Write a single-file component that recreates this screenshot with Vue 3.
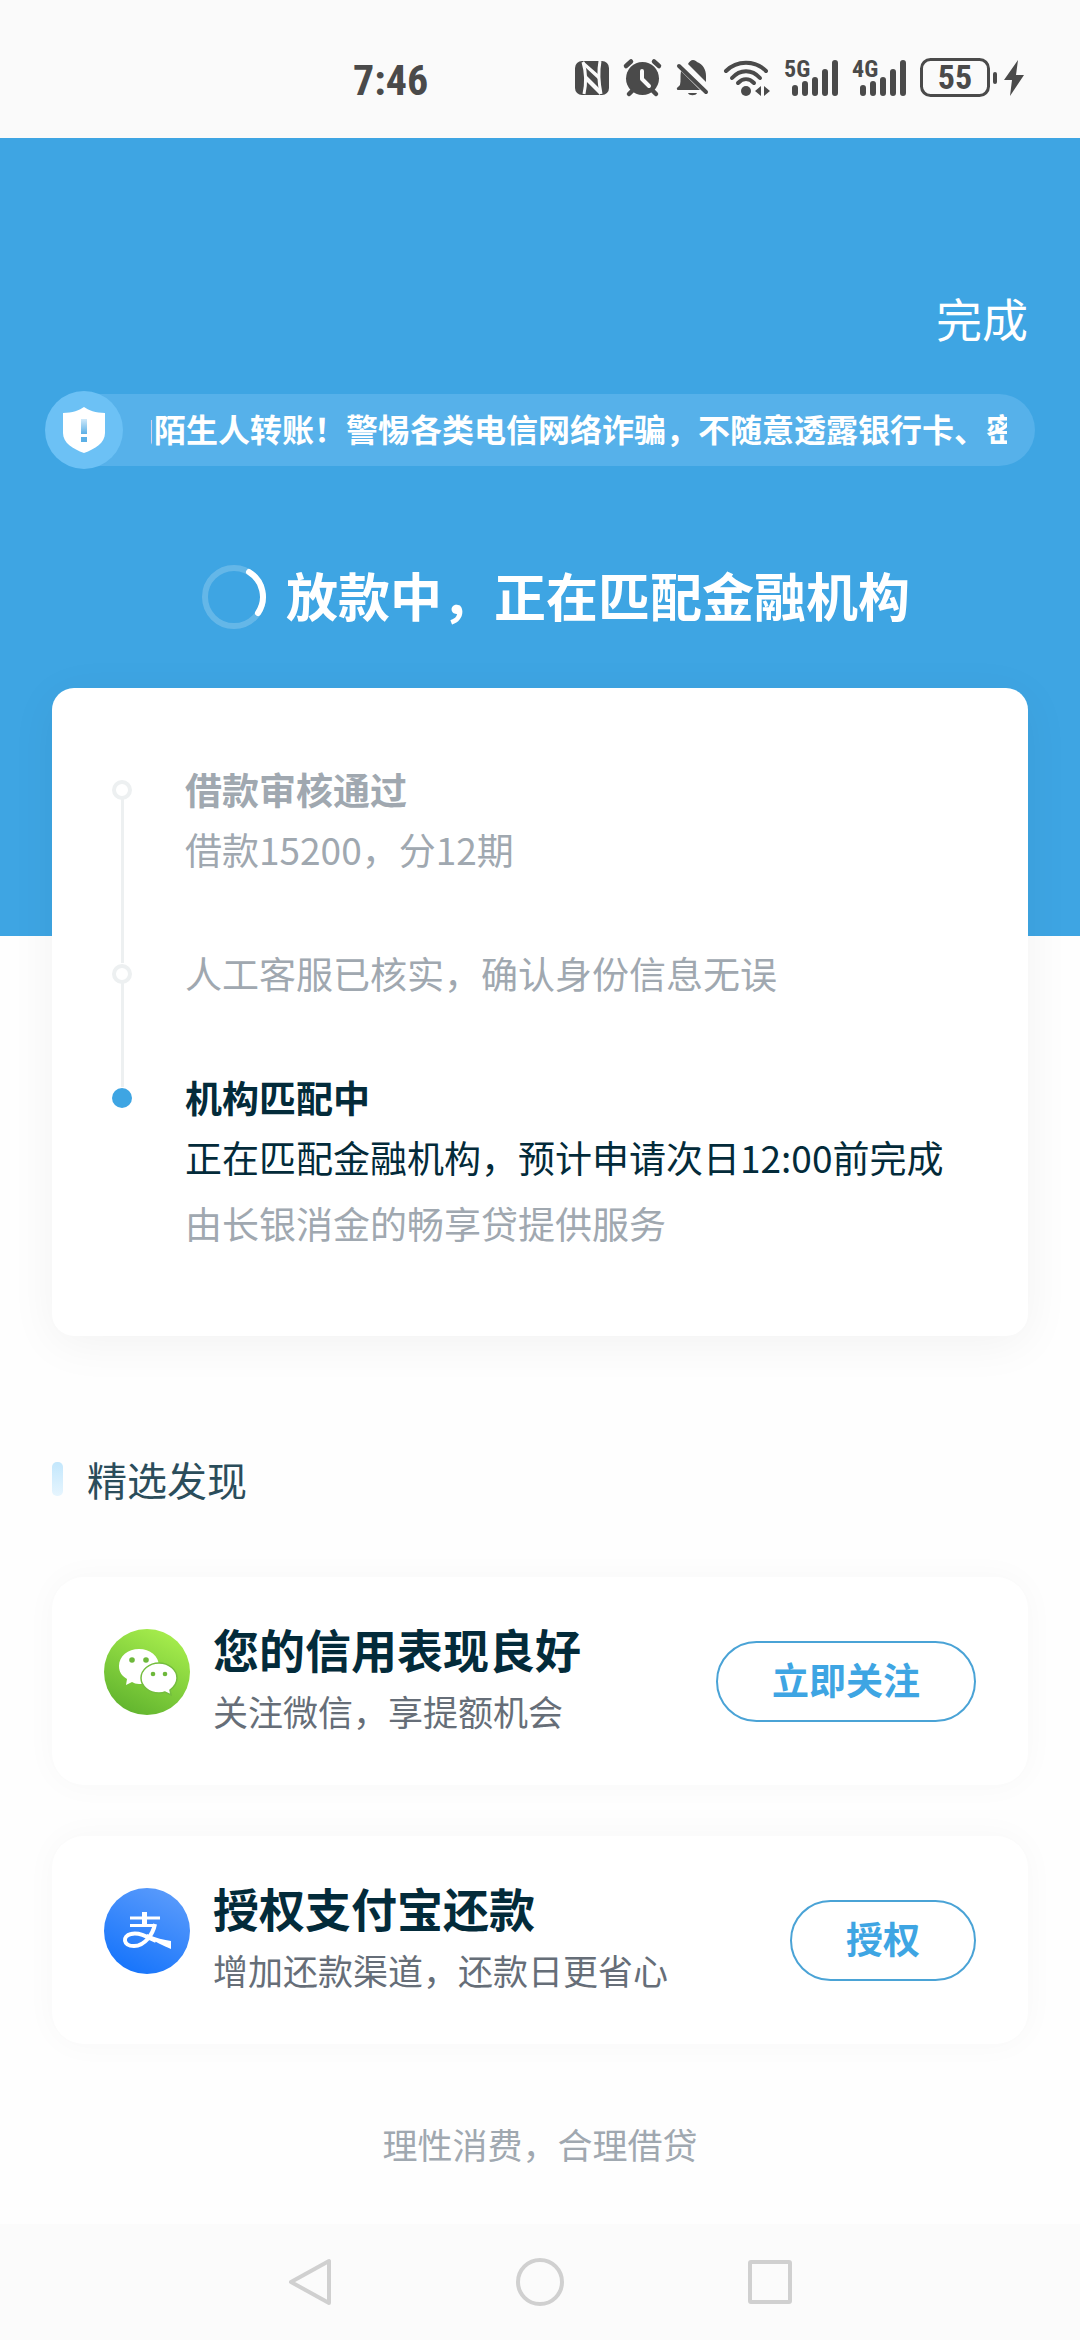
<script setup>
const steps = [
  {
    title: '借款审核通过',
    lines: [{ text: '借款15200，分12期' }],
  },
  {
    lines: [{ text: '人工客服已核实，确认身份信息无误' }],
  },
  {
    title: '机构匹配中',
    active: true,
    lines: [
      { text: '正在匹配金融机构，预计申请次日12:00前完成' },
      { text: '由长银消金的畅享贷提供服务', note: true },
    ],
  },
]

const offers = [
  { icon: 'wechat', title: '您的信用表现良好', desc: '关注微信，享提额机会', action: '立即关注' },
  { icon: 'alipay', title: '授权支付宝还款', desc: '增加还款渠道，还款日更省心', action: '授权' },
]

const signals = ['5G', '4G']
</script>

<template>
  <div class="page">
    <header class="status">
      <time class="clock">7:46</time>
      <div class="indicators">
        <svg width="34" height="40" viewBox="0 0 34 40" aria-label="NFC">
          <rect x="0" y="3" width="34" height="34" rx="7" fill="#4a4a4a" />
          <path d="M8 4C11 14 11 27 9 36M25 3C23 14 24 26 26 36" fill="none" stroke="#fafafa" stroke-width="3" />
          <path d="M8 3L24 17V22L10 9ZM11 17L25 31V37L11 23Z" fill="#fafafa" />
        </svg>
        <svg width="39" height="40" viewBox="0 0 39 40" aria-label="闹钟">
          <circle cx="19.500" cy="20.500" r="16.500" fill="#4a4a4a" />
          <path d="M3 8L8 3.500M36 8L31 3.500M9 33L6 36M30 33L33 36" stroke="#4a4a4a" stroke-width="4.500" stroke-linecap="round" />
          <path d="M19 13V21L26 28" fill="none" stroke="#fafafa" stroke-width="4" stroke-linecap="round" stroke-linejoin="round" />
        </svg>
        <svg width="33" height="40" viewBox="0 0 33 40" aria-label="静音">
          <path d="M12 6C13 4 15 2 17 2C19 2 20 3 21 4C27 6 30 12 30 18V24L12 6ZM5 13L24 32H2C1 32 0 30 2 29L4 27C5 23 4 18 5 13ZM12 35H21C20 38 13 38 12 35Z" fill="#4a4a4a" />
          <path d="M3 8L30 34" stroke="#4a4a4a" stroke-width="4" stroke-linecap="round" />
        </svg>
        <svg width="47" height="40" viewBox="0 0 47 40" aria-label="无线网络">
          <g fill="none" stroke="#4a4a4a" stroke-width="4" stroke-linecap="round">
            <path d="M3 13C14 2 32 2 43 13" />
            <path d="M9 20C17 11 29 11 37 20" />
            <path d="M15 25C20 20 26 20 31 25" />
          </g>
          <circle cx="23" cy="33" r="5" fill="#4a4a4a" />
          <path d="M38 28V38L32 33ZM41 28V38L47 33Z" fill="#4a4a4a" />
        </svg>
        <svg v-for="s in signals" :key="s" width="54" height="40" viewBox="0 0 54 40">
          <text class="net" x="0" y="19">{{ s }}</text>
          <path d="M11 30V35M21 26V35M31 22V35M41 14V35M51 5V35" stroke="#4a4a4a" stroke-width="6" stroke-linecap="round" />
        </svg>
        <svg width="104" height="40" viewBox="0 0 104 40">
          <rect x="1.500" y="1.500" width="67" height="36" rx="9" fill="none" stroke="#4a4a4a" stroke-width="3" />
          <text class="level" x="35" y="31" text-anchor="middle">55</text>
          <path d="M75 16V24" stroke="#4a4a4a" stroke-width="4" stroke-linecap="round" />
          <path d="M98 2L84 22H92L90 38L104 17H96Z" fill="#4a4a4a" />
        </svg>
      </div>
    </header>

    <section class="hero">
      <div class="toolbar">
        <button class="done" type="button">完成</button>
      </div>

      <div class="notice">
        <span class="badge">
          <svg width="42" height="46" viewBox="0 0 42 46" aria-hidden="true">
            <defs>
              <linearGradient id="mark" x1="0" y1="0" x2="0" y2="1">
                <stop offset="0" stop-color="#cfe9fa" />
                <stop offset="1" stop-color="#5cb0e6" />
              </linearGradient>
            </defs>
            <path d="M21 0C25 3 33 6 42 6V26C42 36 32 42 21 46C10 42 0 36 0 26V6C9 6 17 3 21 0Z" fill="#fff" />
            <rect x="18" y="12" width="6" height="15" fill="url(#mark)" />
            <rect x="18" y="30" width="6" height="5" fill="#5cb0e6" />
          </svg>
        </span>
        <div class="ticker">
          <div class="ticker-view">
            <p class="ticker-text">向陌生人转账！警惕各类电信网络诈骗，不随意透露银行卡、密</p>
          </div>
        </div>
      </div>

      <div class="headline">
        <svg width="64" height="64" viewBox="0 0 64 64" aria-hidden="true">
          <circle cx="32" cy="32" r="29" fill="none" stroke="#fff" stroke-opacity=".2" stroke-width="6" />
          <path d="M47 7A29 29 0 0 1 56 48" fill="none" stroke="#fff" stroke-width="6" stroke-linecap="round" />
        </svg>
        <h1>放款中，正在匹配金融机构</h1>
      </div>
    </section>

    <main class="content">
      <ol class="progress">
        <li v-for="(step, i) in steps" :key="i" class="step" :class="{ active: step.active }">
          <span class="rail"><i class="dot"></i></span>
          <div class="step-body">
            <h2 v-if="step.title">{{ step.title }}</h2>
            <p v-for="l in step.lines" :key="l.text" :class="{ note: l.note }">{{ l.text }}</p>
          </div>
        </li>
      </ol>

      <h2 class="section-title">精选发现</h2>

      <article v-for="o in offers" :key="o.title" class="offer">
        <svg v-if="o.icon === 'wechat'" class="logo" width="86" height="86" viewBox="0 0 86 86" aria-hidden="true">
          <defs>
            <linearGradient id="green" x1=".8" y1="0" x2=".3" y2="1">
              <stop offset="0" stop-color="#aaf04e" />
              <stop offset="1" stop-color="#61b42e" />
            </linearGradient>
          </defs>
          <circle cx="43" cy="43" r="43" fill="url(#green)" />
          <path d="M35 20C46 20 55 27 55 37S46 55 35 55C32 55 30 54 28 53L22 56L23 50C18 47 15 43 15 37C15 27 24 20 35 20Z" fill="#fff" />
          <path d="M55 34C65 34 73 41 73 49C73 54 70 58 66 61L67 66L61 63C59 64 57 64 55 64C45 64 37 57 37 49S45 34 55 34Z" fill="#fff" stroke="#74bd3e" stroke-width="1.500" />
          <g fill="#6db83a">
            <circle cx="28" cy="31" r="2.800" /><circle cx="42" cy="31" r="2.800" />
            <circle cx="49" cy="45" r="2.300" /><circle cx="61" cy="45" r="2.300" />
          </g>
        </svg>
        <svg v-else class="logo" width="86" height="86" viewBox="0 0 86 86" aria-hidden="true">
          <defs>
            <linearGradient id="blue" x1=".8" y1="0" x2=".3" y2="1">
              <stop offset="0" stop-color="#5c9cfb" />
              <stop offset="1" stop-color="#1674fb" />
            </linearGradient>
          </defs>
          <circle cx="43" cy="43" r="43" fill="url(#blue)" />
          <path d="M26 30H56M26 37.500H51" stroke="#fff" stroke-width="3" />
          <path d="M38 24H43V38H38Z" fill="#fff" />
          <path d="M51 36C49 46 41 58 30 58C19 58 18 48 27 46C34 44 42 48 52 53" fill="none" stroke="#fff" stroke-width="4" />
          <path d="M43 46C52 50 60 52 67 53V61C60 58 50 53 43 49Z" fill="#fff" />
        </svg>
        <div class="offer-text">
          <h3>{{ o.title }}</h3>
          <p>{{ o.desc }}</p>
        </div>
        <button class="action" type="button">{{ o.action }}</button>
      </article>

      <p class="slogan">理性消费，合理借贷</p>
    </main>

    <nav class="navbar" aria-label="系统导航">
      <button type="button" aria-label="返回">
        <svg width="48" height="48" viewBox="0 0 48 48"><path d="M43 3V45L5 24Z" /></svg>
      </button>
      <button type="button" aria-label="主页">
        <svg width="48" height="48" viewBox="0 0 48 48"><circle cx="24" cy="24" r="22" /></svg>
      </button>
      <button type="button" aria-label="最近任务">
        <svg width="48" height="48" viewBox="0 0 48 48"><rect x="4" y="4" width="40" height="40" rx="1" /></svg>
      </button>
    </nav>
  </div>
</template>

<style>
body {
  background: #fefefe;
}
</style>

<style scoped>
.page {
  display: flex;
  flex-direction: column;
  min-height: 100vh;
  font-family: "Noto Sans CJK SC", "Noto Sans", sans-serif;
  color: #032b3a;
}
h1, h2, h3, p, ol {
  margin: 0;
  padding: 0;
}
button {
  font: inherit;
  background: none;
  border: 0;
  padding: 0;
}
svg {
  display: block;
  flex: none;
  overflow: visible;
}

.status {
  display: flex;
  justify-content: space-between;
  align-items: center;
  box-sizing: border-box;
  height: 138px;
  padding: 18px 56px 0 353px;
  background: #fafafa;
}
.clock, .net, .level {
  font-family: "Liberation Sans Narrow", "Roboto Condensed", Roboto, sans-serif;
  font-weight: 700;
  color: #4a4a4a;
  fill: #4a4a4a;
}
.clock {
  padding-top: 4px;
  font-size: 42px;
}
.net { font-size: 24px; }
.level { font-size: 34px; }
.indicators {
  display: flex;
  gap: 14px;
}

.hero {
  padding: 149px 0 307px;
  background: #3ea5e3;
}
.toolbar {
  display: flex;
  justify-content: flex-end;
  padding: 0 52px;
}
.done {
  font-size: 46px;
  line-height: 60px;
  color: #fff;
}
.notice {
  display: flex;
  align-items: center;
  margin: 44px 45px 0;
}
.badge {
  position: relative;
  z-index: 1;
  display: grid;
  place-items: center;
  flex: none;
  width: 78px;
  height: 78px;
  margin-right: -39px;
  border-radius: 50%;
  background: #6cc1f5;
}
.ticker {
  flex: 1;
  min-width: 0;
  padding: 0 28px 4px 67px;
  border-radius: 0 36px 36px 0;
  background: #56b1ea;
}
.ticker-view {
  overflow: hidden;
}
.ticker-text {
  margin-left: -29px;
  font-size: 32px;
  font-weight: 700;
  line-height: 68px;
  white-space: nowrap;
  color: #fff;
}
.headline {
  display: flex;
  justify-content: center;
  align-items: center;
  gap: 20px;
  margin-top: 96px;
  padding-left: 32px;
}
.headline h1 {
  padding-bottom: 4px;
  font-size: 52px;
  line-height: 60px;
  color: #fff;
}

.content {
  flex: 1;
  margin-top: -248px;
  padding: 0 52px;
}
.progress {
  display: flex;
  flex-direction: column;
  gap: 64px;
  padding: 71px 52px 83px 60px;
  list-style: none;
  border-radius: 22px;
  background: #fff;
  box-shadow: 0 8px 48px rgba(0, 0, 0, .05);
  font-size: 37px;
  line-height: 60px;
  color: #a0a8b0;
}
.step {
  display: flex;
  gap: 53px;
}
.rail {
  display: flex;
  justify-content: center;
  flex: none;
  width: 20px;
  margin-bottom: -84px;
  padding-top: 21px;
  background: linear-gradient(#edf0f1, #edf0f1) center 40px / 3px 100% no-repeat;
}
.dot {
  box-sizing: border-box;
  width: 20px;
  height: 20px;
  border: 4px solid #edf0f1;
  border-radius: 50%;
  background: #fff;
}
.step-body h2 {
  font-size: 37px;
  line-height: 60px;
}
.active {
  color: #032b3a;
}
.active .rail {
  margin-bottom: 0;
  background: none;
}
.active .dot {
  border: 0;
  background: #3ea5e3;
}
.note {
  margin-top: 6px;
  color: #a0a8b0;
}

.section-title {
  display: flex;
  align-items: center;
  gap: 24px;
  margin: 113px 0 68px;
  font-size: 40px;
  font-weight: 400;
  line-height: 60px;
  color: #2b4d5b;
}
.section-title::before {
  content: "";
  width: 11px;
  height: 34px;
  border-radius: 5px;
  background: linear-gradient(#c3e7fc, #e6f5fe);
}

.offer {
  display: flex;
  align-items: center;
  padding: 41px 52px;
  border-radius: 32px;
  background: #fff;
  box-shadow: 0 0 32px rgba(0, 0, 0, .03);
}
.offer + .offer {
  margin-top: 51px;
}
.logo {
  align-self: flex-start;
  margin: 11px 23px 0 0;
}
.offer-text {
  flex: 1;
}
.offer-text h3 {
  font-size: 46px;
  line-height: 60px;
}
.offer-text p {
  font-size: 35px;
  line-height: 66px;
  color: #666e78;
}
.action {
  box-sizing: border-box;
  height: 81px;
  padding: 0 54px 5px;
  border: 2px solid #4aa3d6;
  border-radius: 41px;
  font-size: 37px;
  font-weight: 700;
  line-height: 60px;
  color: #3ea5e3;
}
.slogan {
  padding: 70px 0 48px;
  font-size: 35px;
  line-height: 60px;
  text-align: center;
  color: #a0a8b0;
}

.navbar {
  display: flex;
  justify-content: center;
  align-items: center;
  gap: 182px;
  height: 116px;
  background: #fbfbfb;
}
.navbar svg {
  fill: none;
  stroke: #d0d0d0;
  stroke-width: 4px;
  stroke-linejoin: round;
}
</style>
